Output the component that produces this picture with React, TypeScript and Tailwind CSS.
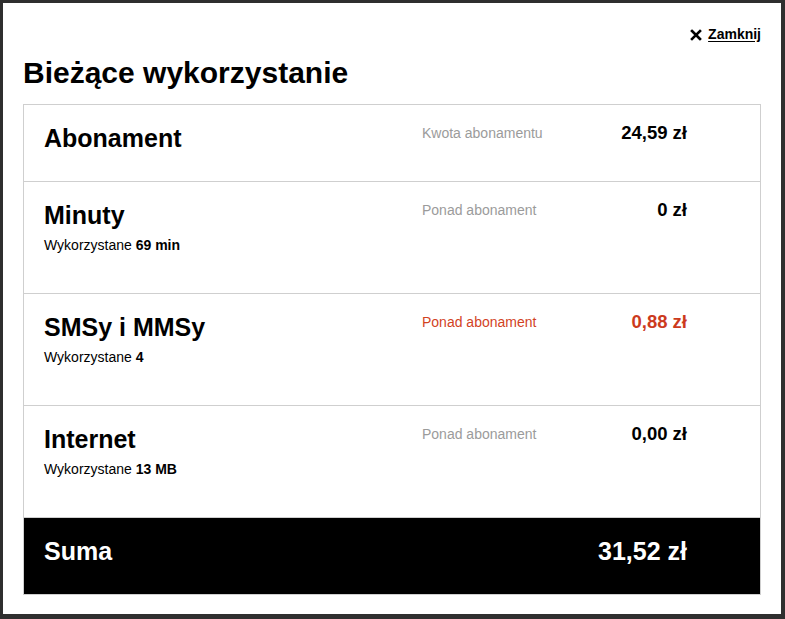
const rows = [
  {
    title: "Abonament",
    used: null as null | { label: string; value: string },
    label: "Kwota abonamentu",
    value: "24,59 zł",
    over: false,
    height: "h-[77px]",
  },
  {
    title: "Minuty",
    used: { label: "Wykorzystane", value: "69 min" },
    label: "Ponad abonament",
    value: "0 zł",
    over: false,
    height: "h-[112px]",
  },
  {
    title: "SMSy i MMSy",
    used: { label: "Wykorzystane", value: "4" },
    label: "Ponad abonament",
    value: "0,88 zł",
    over: true,
    height: "h-[112px]",
  },
  {
    title: "Internet",
    used: { label: "Wykorzystane", value: "13 MB" },
    label: "Ponad abonament",
    value: "0,00 zł",
    over: false,
    height: "h-[112px]",
  },
];

export default function App() {
  return (
    <div
      className="w-[785px] h-[619px] bg-[#2f2f2f] p-[3px] overflow-hidden"
      style={{ fontFamily: '"Liberation Sans", Arial, sans-serif' }}
    >
      <div className="w-[778px] h-[611px] bg-white px-5 pt-[21px]">
        {/* close link */}
        <div className="flex justify-end">
          <button className="flex items-center gap-[6px] text-[14px] leading-5 font-bold text-black">
            <svg width="12" height="12" viewBox="0 0 12 12" className="mt-[1px]">
              <path d="M2 2 L10 10 M10 2 L2 10" stroke="#000" strokeWidth="2.6" strokeLinecap="square" />
            </svg>
            <span className="underline underline-offset-2">Zamknij</span>
          </button>
        </div>

        <h1 className="mt-[13px] text-[30px] leading-8 font-bold text-black">Bieżące wykorzystanie</h1>

        <div className="mt-[15px] border border-[#cfcfcf]">
          {rows.map((r) => (
            <div
              key={r.title}
              className={`${r.height} border-b border-[#cfcfcf] flex pl-5 pr-[73px] pt-[18px]`}
            >
              <div className="flex-1">
                <div className="mt-[1px] text-[25px] leading-7 font-bold text-black">{r.title}</div>
                {r.used && (
                  <div className="mt-[6px] text-[14px] leading-5 text-black">
                    {r.used.label} <span className="font-bold">{r.used.value}</span>
                  </div>
                )}
              </div>
              <div
                className={`w-[181px] text-[14px] leading-5 ${r.over ? "text-[#d2431f]" : "text-[#9b9b9b]"}`}
              >
                {r.label}
              </div>
              <div
                className={`w-[84px] text-right text-[18.5px] leading-5 font-bold ${r.over ? "text-[#cc3a1d]" : "text-black"}`}
              >
                {r.value}
              </div>
            </div>
          ))}
          <div className="h-[76px] bg-black flex pl-5 pr-[73px] pt-[19px] text-white">
            <div className="flex-1 text-[25px] leading-7 font-bold">Suma</div>
            <div className="text-[25px] leading-7 font-bold">31,52 zł</div>
          </div>
        </div>
      </div>
    </div>
  );
}
